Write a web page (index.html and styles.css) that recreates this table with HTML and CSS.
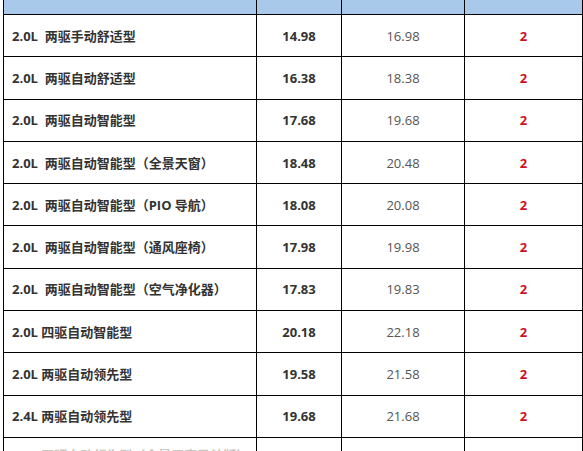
FILE: index.html
```html
<!DOCTYPE html>
<html lang="zh">
<head>
<meta charset="utf-8">
<link rel="stylesheet" href="styles.css">
</head>
<body>
<table class="price">
  <colgroup>
    <col class="c-name"><col class="c-now"><col class="c-guide"><col class="c-off">
  </colgroup>
  <thead>
    <tr><th>车型</th><th>优惠价(万元)</th><th>指导价(万元)</th><th>优惠幅度(万元)</th></tr>
  </thead>
  <tbody>
    <tr><td class="name">2.0L&nbsp; 两驱手动舒适型</td><td class="now">14.98</td><td class="guide">16.98</td><td class="off">2</td></tr>
    <tr><td class="name">2.0L&nbsp; 两驱自动舒适型</td><td class="now">16.38</td><td class="guide">18.38</td><td class="off">2</td></tr>
    <tr><td class="name">2.0L&nbsp; 两驱自动智能型</td><td class="now">17.68</td><td class="guide">19.68</td><td class="off">2</td></tr>
    <tr><td class="name">2.0L&nbsp; 两驱自动智能型（全景天窗）</td><td class="now">18.48</td><td class="guide">20.48</td><td class="off">2</td></tr>
    <tr><td class="name">2.0L&nbsp; 两驱自动智能型（PIO 导航）</td><td class="now">18.08</td><td class="guide">20.08</td><td class="off">2</td></tr>
    <tr><td class="name">2.0L&nbsp; 两驱自动智能型（通风座椅）</td><td class="now">17.98</td><td class="guide">19.98</td><td class="off">2</td></tr>
    <tr><td class="name">2.0L&nbsp; 两驱自动智能型（空气净化器）</td><td class="now">17.83</td><td class="guide">19.83</td><td class="off">2</td></tr>
    <tr><td class="name">2.0L 四驱自动智能型</td><td class="now">20.18</td><td class="guide">22.18</td><td class="off">2</td></tr>
    <tr><td class="name">2.0L 两驱自动领先型</td><td class="now">19.58</td><td class="guide">21.58</td><td class="off">2</td></tr>
    <tr><td class="name">2.4L 两驱自动领先型</td><td class="now">19.68</td><td class="guide">21.68</td><td class="off">2</td></tr>
    <tr class="last"><td class="name">2.4L 四驱自动领先型（全景天窗导航版）</td><td class="now">21.68</td><td class="guide">23.68</td><td class="off">2</td></tr>
  </tbody>
</table>
</body>
</html>
```
FILE: styles.css
```css
html, body {
  margin: 0;
  padding: 0;
  background: #ffffff;
  overflow: hidden;
}
body {
  font-family: "Open Sans", "Noto Sans CJK SC", sans-serif;
  font-size: 13px;
  color: #333333;
}
.price {
  border-collapse: collapse;
  table-layout: fixed;
  width: 579px;
  margin: -25px 0 0 3px;
}
.c-name { width: 253px; }
.c-now { width: 85px; }
.c-guide { width: 123px; }
.c-off { width: 118px; }
.price th, .price td {
  border: 1px solid #000000;
  padding: 0;
}
.price th {
  height: 39px;
  background: #a9c9ea;
  font-weight: bold;
  color: #333333;
  vertical-align: bottom;
  line-height: 14px;
  padding-bottom: 16px;
  box-sizing: border-box;
}
.price td {
  height: 41.3px;
  vertical-align: middle;
  text-align: center;
  line-height: 18px;
}
.price td.name {
  text-align: left;
  padding-left: 8px;
  font-weight: bold;
  color: #333333;
  white-space: nowrap;
}
.price td.now {
  font-weight: bold;
  color: #333333;
}
.price td.guide {
  color: #555555;
}
.price td.off {
  font-weight: bold;
  color: #d0101e;
}
.price tr.last td {
  vertical-align: top;
  padding-top: 8px;
  color: #c8c8c0;
}
```
